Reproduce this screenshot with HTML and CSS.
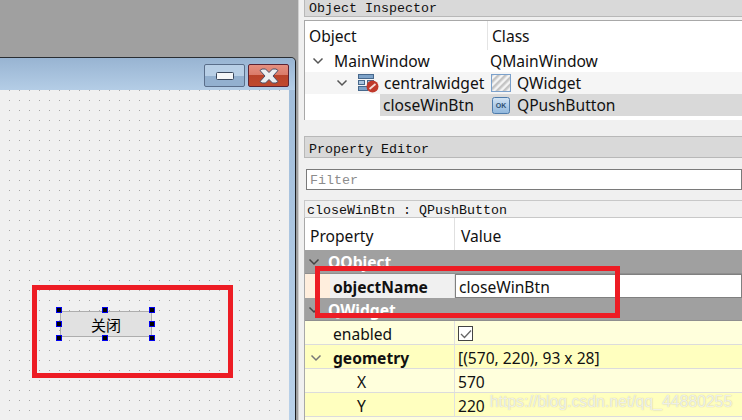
FILE: index.html
```html
<!DOCTYPE html>
<html lang="zh">
<head>
<meta charset="utf-8">
<title>Qt Designer</title>
<link rel="stylesheet" href="styles.css">
</head>
<body>
<div class="app">
  <section class="canvas-pane">
    <div class="window">
      <div class="titlebar">
        <button class="wbtn wbtn-min"><svg width="18" height="8" viewBox="0 0 18 8"><rect x="0.5" y="0.5" width="17" height="7" rx="1" fill="#f4f6f8" stroke="#39475c"/></svg></button>
        <button class="wbtn wbtn-close"><svg width="20" height="16" viewBox="0 0 20 16"><path d="M1 2.5 3 1h3.5L10 4.5 13.5 1H17l2 1.500L14 8l5 5.500L17 15h-3.500L10 11.500 6.500 15H3l-2-1.500L6 8Z" fill="#eceff2" stroke="#4a4f68"/></svg></button>
      </div>
      <div class="form-row">
        <div class="form">
          <div class="push">关闭</div>
          <i class="h h1"></i><i class="h h2"></i><i class="h h3"></i>
          <i class="h h4"></i><i class="h h5"></i>
          <i class="h h6"></i><i class="h h7"></i><i class="h h8"></i>
        </div>
      </div>
    </div>
    <div class="mark mark-a"></div>
  </section>

  <section class="side">
    <div class="dock-title">Object Inspector</div>
    <div class="tree">
      <div class="thead"><div class="tc1">Object</div><div class="tc2">Class</div></div>
      <div class="trow">
        <div class="tc1 ind1"><svg class="chev" width="12" height="8" viewBox="0 0 12 8"><path d="M1.500 1.500 6 6l4.500-4.500" fill="none" stroke="#555" stroke-width="1.500"/></svg><span>MainWindow</span></div>
        <div class="tc2 plain">QMainWindow</div>
      </div>
      <div class="trow alt">
        <div class="tc1 ind2"><svg class="chev" width="12" height="8" viewBox="0 0 12 8"><path d="M1.500 1.500 6 6l4.500-4.500" fill="none" stroke="#555" stroke-width="1.500"/></svg>
          <svg class="ic-layout" width="21" height="20" viewBox="0 0 21 20"><rect x="0.500" y="1.500" width="15" height="4" fill="#7ea3c9" stroke="#47688c"/><rect x="0.500" y="7.500" width="6" height="4" fill="#a9c3dd" stroke="#47688c"/><rect x="9.500" y="7.500" width="6" height="4" fill="#a9c3dd" stroke="#47688c"/><rect x="0.500" y="13.500" width="9" height="4" fill="#7ea3c9" stroke="#47688c"/><circle cx="14.500" cy="13.500" r="6" fill="#c0392b"/><path d="M11.500 16 17.500 11" stroke="#f6dcd8" stroke-width="1.800"/></svg>
          <span>centralwidget</span></div>
        <div class="tc2 cls"><svg width="20" height="18" viewBox="0 0 20 18"><defs><pattern id="hat" width="5" height="5" patternUnits="userSpaceOnUse" patternTransform="rotate(-45)"><rect width="5" height="5" fill="#f4f4f4"/><rect width="5" height="2.500" fill="#c4c4c4"/></pattern></defs><rect x="0.500" y="0.500" width="19" height="17" fill="url(#hat)" stroke="#7ba1cc"/></svg><span>QWidget</span></div>
      </div>
      <div class="trow">
        <div class="tc1 ind3"><span class="sel-name">closeWinBtn</span></div>
        <div class="tc2 cls sel"><svg class="ic-ok" width="18" height="17" viewBox="0 0 18 17"><defs><linearGradient id="okg" x1="0" y1="0" x2="0" y2="1"><stop offset="0" stop-color="#d3e4f4"/><stop offset="1" stop-color="#8fb6dc"/></linearGradient></defs><rect x="0.500" y="0.500" width="17" height="16" rx="2" fill="url(#okg)" stroke="#4f7cab"/><text x="9" y="11" class="ok">OK</text></svg><span>QPushButton</span></div>
      </div>
    </div>

    <div class="dock-title dock-title-2">Property Editor</div>
    <div class="filter">Filter</div>
    <div class="crumb">closeWinBtn : QPushButton</div>
    <div class="props">
      <div class="phead"><div class="pc1">Property</div><div class="pc2">Value</div></div>
      <div class="group"><svg class="chev" width="12" height="8" viewBox="0 0 12 8"><path d="M1.500 1.500 6 6l4.500-4.500" fill="none" stroke="#444" stroke-width="1.500"/></svg><span>QObject</span></div>
      <div class="prow objname">
        <div class="stripe"></div>
        <div class="pc1 name">objectName</div>
        <div class="pc2 edit">closeWinBtn</div>
      </div>
      <div class="group group-b"><svg class="chev" width="12" height="8" viewBox="0 0 12 8"><path d="M1.500 1.500 6 6l4.500-4.500" fill="none" stroke="#444" stroke-width="1.500"/></svg><span>QWidget</span></div>
      <div class="prow lite">
        <div class="pc1 key">enabled</div>
        <div class="pc2"><span class="check"><svg width="12" height="10" viewBox="0 0 12 10"><path d="M1 5l3.500 3.500L11 1.500" fill="none" stroke="#666" stroke-width="1.300"/></svg></span></div>
      </div>
      <div class="prow deep">
        <div class="pc1 name"><svg class="chev chev-g" width="12" height="8" viewBox="0 0 12 8"><path d="M1.500 1.500 6 6l4.500-4.500" fill="none" stroke="#777" stroke-width="1.500"/></svg>geometry</div>
        <div class="pc2">[(570, 220), 93 x 28]</div>
      </div>
      <div class="prow lite">
        <div class="pc1 sub">X</div>
        <div class="pc2">570</div>
      </div>
      <div class="prow deep">
        <div class="pc1 sub">Y</div>
        <div class="pc2">220</div>
      </div>
      <div class="prow lite"></div>
    </div>
    <div class="mark mark-b"></div>
    <div class="wm">https://blog.csdn.net/qq_44880255</div>
  </section>
</div>
</body>
</html>
```
FILE: styles.css
```css
* { box-sizing: border-box; }
html, body { margin: 0; padding: 0; }
body { width: 742px; height: 420px; overflow: hidden; background: #f0f0f0; font-family: "Noto Sans", "Noto Sans CJK SC", sans-serif; font-size: 15.6px; color: #111; }
.app { position: relative; display: flex; width: 742px; height: 420px; overflow: hidden; }

/* canvas */
.canvas-pane { width: 298px; height: 420px; flex: none; background: #a0a0a0; padding-top: 57px; }
.window { width: 296px; height: 363px; background: linear-gradient(#9fbbd8, #b9d1e9); border-top: 1px solid #2a2e33; border-right: 1px solid #1a1d20; border-top-right-radius: 5px; display: flex; flex-direction: column; }
.titlebar { height: 32px; flex: none; display: flex; justify-content: flex-end; gap: 3px; padding: 6px 6px 0 0; background: linear-gradient(#98b4d2, #b4cde6); border-top-right-radius: 5px; }
.wbtn { width: 41px; height: 23px; padding: 0; border-radius: 2px; display: flex; align-items: center; justify-content: center; }
.wbtn-min { border: 1px solid #5a6e8a; background: linear-gradient(#b8cfe6 0 50%, #93b0cf 50% 100%); }
.wbtn-close { border: 1px solid #5c2333; background: linear-gradient(#e58f7f, #da7a69 48%, #b9432a 50%, #c0492e 100%); }
.form-row { flex: 1; padding-right: 6px; }
.form { position: relative; height: 100%; background-color: #f0f0f0; background-image: conic-gradient(at 1px 1px, transparent 75%, #a8a8a8 0); background-size: 10px 10px; background-position: 9px 0; }
.push { position: absolute; left: 60px; top: 221px; width: 92px; height: 26px; background: #e1e1e1; border: 1px solid #adadad; display: flex; align-items: center; justify-content: center; font-size: 15px; color: #000; }
.h { position: absolute; width: 6px; height: 6px; background: #000; border: 1px solid #0000ee; }
.h1, .h4, .h6 { left: 56px; }
.h2, .h7 { left: 102px; }
.h3, .h5, .h8 { left: 149px; }
.h1, .h2, .h3 { top: 217px; }
.h4, .h5 { top: 231px; }
.h6, .h7, .h8 { top: 245px; }

/* annotations */
.mark { position: absolute; border: 5px solid #ed1c24; z-index: 5; }
.mark-a { left: 32px; top: 285px; width: 201px; height: 93px; }
.mark-b { left: 315px; top: 266px; width: 305px; height: 52px; }

/* side */
.side { flex: 1; min-width: 0; padding-left: 5px; border-left: 1px solid #d0d0d0; display: flex; flex-direction: column; }
.dock-title { height: 17px; flex: none; background: #d9d9d9; border: 1px solid #b8b8b8; border-top: 0; border-right: 0; padding: 1px 0 0 4px; font-family: "Liberation Mono", monospace; font-size: 13.33px; line-height: 15px; color: #111; }
.tree { height: 100px; margin-top: 3px; flex: none; background: #fff; border-top: 1px solid #a8a8a8; border-left: 1px solid #a8a8a8; }
.thead { height: 29px; display: flex; align-items: center; }
.thead .tc1 { border-right: 1px solid #e4e4e4; height: 100%; padding-left: 4px; }
.thead .tc2 { padding-left: 4px; }
.tc1 { width: 183px; flex: none; display: flex; align-items: center; height: 100%; }
.tc2 { flex: 1; display: flex; align-items: center; height: 100%; padding-left: 3px; white-space: nowrap; }
.tc2.plain { padding-left: 2px; }
.trow { height: 22px; display: flex; align-items: center; }
.alt { background: #f5f5f5; }
.ind1 { padding-left: 7px; }
.ind1 span { margin-left: 10px; }
.ind2 { padding-left: 31px; }
.ind2 svg.ic-layout { margin-left: 10px; }
.ind2 span { margin-left: 5px; }
.ind3 { padding-left: 75px; }
.sel-name, .sel { background: #d9d9d9; }
.sel-name { display: flex; align-items: center; height: 100%; width: 108px; padding-left: 3px; }
.cls svg { flex: none; }
.cls span { margin-left: 6px; }
.cls .ic-ok { margin-left: 1px; }
.cls .ic-ok + span { margin-left: 7px; }
.ok { font-family: "Liberation Sans", sans-serif; font-size: 7px; font-weight: 700; fill: #2e4f73; text-anchor: middle; }
.dock-title-2 { height: 22px; margin-top: 16px; border-top: 1px solid #b8b8b8; padding-top: 0; line-height: 25px; }
.filter { height: 21px; margin: 11px 0 0 2px; flex: none; background: #fff; border: 1px solid #7a7a7a; padding-left: 3px; font-family: "Liberation Mono", monospace; font-size: 13.33px; line-height: 21px; color: #8c8c8c; }
.crumb { height: 18px; margin-top: 10px; flex: none; background: #f0f0f0; border: 1px solid #c8c8c8; border-right: 0; padding-left: 2px; font-family: "Liberation Mono", monospace; font-size: 13.33px; line-height: 20px; overflow: hidden; color: #111; }
.props { flex: 1; background: #fff; border-left: 1px solid #a8a8a8; }
.phead { height: 32px; display: flex; align-items: center; }
.pc1 { width: 150px; flex: none; height: 100%; display: flex; align-items: center; border-right: 1px solid #e0e0e0; padding-top: 2px; }
.pc2 { flex: 1; height: 100%; display: flex; align-items: center; padding: 2px 0 0 3px; white-space: nowrap; }
.phead .pc1 { padding: 4px 0 0 5px; }
.phead .pc2 { padding: 4px 0 0 6px; }
.group { height: 24px; background: #a0a0a0; display: flex; align-items: center; padding: 1px 0 0 3px; color: #fff; font-weight: 700; border-bottom: 1px solid #8f8f8f; }
.group-b { height: 23px; }
.group span { margin-left: 8px; }
.chev { flex: none; }
.prow { height: 24px; display: flex; align-items: center; border-bottom: 1px solid #dcdcdc; }
.objname { background: #ffeedd; border-bottom: 0; }
.stripe { width: 25px; height: 100%; flex: none; }
.objname .pc1 { width: 125px; background: #f0f0f0; padding-left: 3px; }
.name { font-weight: 700; }
.edit { background: #fff; border: 1px solid #808080; padding-left: 3px; }
.lite { background: #ffffdc; }
.deep { background: #ffffbf; }
.key { padding-left: 28px; }
.deep .name { padding-left: 5px; }
.chev-g { margin-right: 11px; }
.sub { padding-left: 52px; }
.check { width: 15px; height: 15px; border: 1px solid #444; background: #fff; display: flex; align-items: center; justify-content: center; }
.wm { position: absolute; left: 490px; top: 393px; font-family: "Liberation Sans", sans-serif; font-size: 15.800px; color: rgba(255,255,255,.75); text-shadow: 0 0 1px rgba(120,120,120,.5); white-space: nowrap; z-index: 6; }
```
